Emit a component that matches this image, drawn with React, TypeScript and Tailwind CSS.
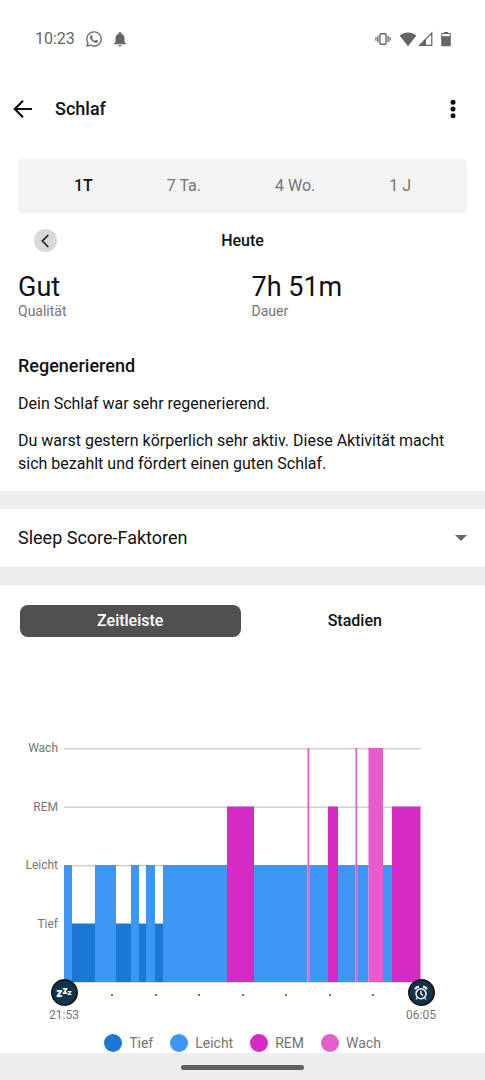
import { FaWhatsapp } from "react-icons/fa";
import { MdNotifications } from "react-icons/md";

type StageName = "Tief" | "Leicht" | "REM" | "Wach";

type Segment = {
  stage: StageName;
  start: number;
  end: number;
};

const stageFill: Record<StageName, string> = {
  Tief: "fill-[#1a77d4]",
  Leicht: "fill-[#3c96f4]",
  REM: "fill-[#d42cc2]",
  Wach: "fill-[#e65cca]",
};

const stageLevel: Record<StageName, number> = { Tief: 1, Leicht: 2, REM: 3, Wach: 4 };

const levels: StageName[] = ["Wach", "REM", "Leicht", "Tief"];
const legend: StageName[] = ["Tief", "Leicht", "REM", "Wach"];
const ranges = ["1T", "7 Ta.", "4 Wo.", "1 J"];

const segments: Segment[] = [
  { stage: "Leicht", start: 0, end: 8 },
  { stage: "Tief", start: 8, end: 31 },
  { stage: "Leicht", start: 31, end: 52 },
  { stage: "Tief", start: 52, end: 67 },
  { stage: "Leicht", start: 67, end: 75 },
  { stage: "Tief", start: 75, end: 82 },
  { stage: "Leicht", start: 82, end: 91 },
  { stage: "Tief", start: 91, end: 99 },
  { stage: "Leicht", start: 99, end: 163 },
  { stage: "REM", start: 163, end: 190 },
  { stage: "Leicht", start: 190, end: 243.5 },
  { stage: "Wach", start: 243.5, end: 245.3 },
  { stage: "Leicht", start: 245.3, end: 264 },
  { stage: "REM", start: 264, end: 274 },
  { stage: "Leicht", start: 274, end: 291.5 },
  { stage: "Wach", start: 291.5, end: 293.2 },
  { stage: "Leicht", start: 293.2, end: 304.5 },
  { stage: "Wach", start: 304.5, end: 319 },
  { stage: "Leicht", start: 319, end: 328 },
  { stage: "REM", start: 328, end: 356.5 },
];

function StatusBar() {
  return (
    <div className="flex h-[78px] items-center justify-between pl-[35px] pr-[34px] text-[#666]">
      <div className="flex items-center">
        <span className="text-base">10:23</span>
        <FaWhatsapp className="ml-2.5 size-[18px]" />
        <MdNotifications className="ml-2 size-[18px]" />
      </div>
      <div className="flex items-center">
        <svg className="h-4 w-4" viewBox="0 0 16 16" fill="none" stroke="currentColor">
          <rect x="5" y="2.8" width="6" height="10.4" rx="1" strokeWidth="1.4" />
          <path d="M2.9 4.8v6.4M13.1 4.8v6.4M.9 6.2v3.6M15.1 6.2v3.6" strokeWidth="1.3" />
        </svg>
        <svg className="ml-2 h-4 w-[18px]" viewBox="0 0 18 16" fill="currentColor">
          <path d="M9 15.2.6 4.6C5.4.6 12.6.6 17.4 4.6z" />
        </svg>
        <svg className="ml-px h-4 w-[15px]" viewBox="0 0 15 16">
          <path d="M1.6 14.3 13.8 2v12.3z" fill="none" stroke="currentColor" strokeWidth="1.2" />
          <path d="M.8 14.6 8 7.4v7.2z" fill="currentColor" />
        </svg>
        <svg className="ml-2 h-4 w-[10px]" viewBox="0 0 10 16">
          <path d="M3 2V.9h4V2h2q.8 0 .8.8v11.6q0 .8-.8.8H1q-.8 0-.8-.8V2.8Q.2 2 1 2z" fill="currentColor" />
          <path d="M1.2 3h7.6v2.2H1.2z" fill="#fff" />
        </svg>
      </div>
    </div>
  );
}

function Header() {
  return (
    <header className="flex h-[62px] items-center pl-3 pr-6">
      <button type="button" aria-label="Zurück">
        <svg className="h-[22px] w-[22px]" viewBox="0 0 22 22" fill="none" stroke="currentColor" strokeWidth="2.2">
          <path d="M20 11H3M11 2.8 2.8 11l8.2 8.2" />
        </svg>
      </button>
      <h1 className="ml-[21px] text-lg font-medium">Schlaf</h1>
      <button type="button" aria-label="Mehr Optionen" className="ml-auto">
        <svg className="h-5 w-4" viewBox="0 0 16 20" fill="currentColor">
          <circle cx="8" cy="3.2" r="2.5" />
          <circle cx="8" cy="10" r="2.5" />
          <circle cx="8" cy="16.8" r="2.5" />
        </svg>
      </button>
    </header>
  );
}

function Metric({ value, label }: { value: string; label: string }) {
  return (
    <div className="flex-1">
      <p className="text-[27px] leading-8">{value}</p>
      <p className="text-sm leading-4 text-[#757575]">{label}</p>
    </div>
  );
}

function SleepChart() {
  return (
    <div>
      <div className="flex pr-16">
        <div className="flex h-[234px] w-16 shrink-0 flex-col pr-1.5 text-right text-xs text-[#757575]">
          {levels.map((level) => (
            <div key={level} className="flex flex-1 items-center justify-end">
              {level}
            </div>
          ))}
        </div>
        <svg className="mt-7 h-[236px] min-w-0 flex-1" viewBox="0 0 357 236" preserveAspectRatio="none">
          {levels.map((level) => (
            <rect
              key={level}
              x="0"
              y={235 - stageLevel[level] * 58.5}
              width="357"
              height={level === "Tief" ? 0 : 1.5}
              className="fill-[#cfcfcf]"
            />
          ))}
          <rect x="0" y="234.5" width="357" height="1.3" className="fill-[#cfcfcf]" />
          {segments.map(({ stage, start, end }) => (
            <rect
              key={start}
              x={start}
              y={235 - stageLevel[stage] * 58.5}
              width={end - start}
              height={stageLevel[stage] * 58.5}
              className={stageFill[stage]}
            />
          ))}
        </svg>
      </div>
      <div className="relative -mt-1 flex items-start justify-between px-[50px]">
        <div className="flex w-7 flex-col items-center">
          <div className="flex h-[27px] w-[27px] items-center justify-center rounded-full border-2 border-[#1a1a1a] bg-[#103350] font-black text-white">
            <span className="text-xs leading-3">z</span>
            <span className="pb-1 text-[10px] leading-3">z</span>
            <span className="text-[8px] leading-3">z</span>
          </div>
          <span className="mt-px text-xs text-[#757575]">21:53</span>
        </div>
        <div className="flex h-8 flex-1 items-center justify-between px-[33px]">
          {[23, 0, 1, 2, 3, 4, 5].map((hour) => (
            <span key={hour} className="h-0.5 w-0.5 rounded-full bg-[#444]" />
          ))}
        </div>
        <div className="flex w-7 flex-col items-center">
          <div className="flex h-[27px] w-[27px] items-center justify-center rounded-full border-2 border-[#1a1a1a] bg-[#103350] text-white">
            <svg className="size-4" viewBox="0 0 16 16" fill="none" stroke="currentColor" strokeWidth="1.5">
              <circle cx="8" cy="8.7" r="5" />
              <path d="M8 5.8v3.1l2 1.5M4 13l-1 1.5M12 13l1 1.5" strokeWidth="1.3" />
              <path d="M2.2 4.3Q3.2 1.9 6 1.8M13.8 4.3Q12.8 1.9 10 1.8" strokeWidth="1.9" />
            </svg>
          </div>
          <span className="mt-px text-xs text-[#757575]">06:05</span>
        </div>
      </div>
      <ul className="mt-2.5 flex h-5 items-center justify-center gap-[17px] text-sm text-[#757575]">
        {legend.map((stage) => (
          <li key={stage} className="flex items-center gap-[7px]">
            <svg className="h-[18px] w-[18px]" viewBox="0 0 18 18">
              <circle cx="9" cy="9" r="9" className={stageFill[stage]} />
            </svg>
            {stage}
          </li>
        ))}
      </ul>
    </div>
  );
}

export default function App() {
  return (
    <div className="min-h-screen bg-white font-['Roboto',sans-serif] text-[#111]">
      <StatusBar />
      <Header />
      <main>
        <nav className="mx-[18px] mt-[19px] flex h-[54px] items-center justify-between rounded bg-[#f3f3f3] px-14">
          {ranges.map((range, i) => (
            <button
              key={range}
              type="button"
              aria-pressed={i === 0}
              className={i === 0 ? "text-base font-medium" : "text-base text-[#757575]"}
            >
              {range}
            </button>
          ))}
        </nav>

        <div className="grid h-[55px] grid-cols-[1fr_auto_1fr] items-center px-[34px]">
          <button
            type="button"
            aria-label="Vorheriger Tag"
            className="flex h-[23px] w-[23px] items-center justify-center rounded-full bg-[#d8d8d8]"
          >
            <svg className="h-4 w-4" viewBox="0 0 16 16" fill="none" stroke="currentColor" strokeWidth="1.5">
              <path d="M10.3 2 4.3 8l6 6" />
            </svg>
          </button>
          <h2 className="text-base font-medium">Heute</h2>
        </div>

        <section className="px-[18px] pb-4">
          <div className="flex gap-[18px] pt-[3px]">
            <Metric value="Gut" label="Qualität" />
            <Metric value="7h 51m" label="Dauer" />
          </div>
          <h2 className="mt-[35px] text-lg font-medium leading-6">Regenerierend</h2>
          <p className="mt-[14px] text-base leading-[23px]">Dein Schlaf war sehr regenerierend.</p>
          <p className="mt-[14px] text-base leading-[23px]">
            Du warst gestern körperlich sehr aktiv. Diese Aktivität macht sich bezahlt und fördert einen guten
            Schlaf.
          </p>
        </section>

        <section className="border-y-[18px] border-[#ededed]">
          <button
            type="button"
            aria-expanded={false}
            className="flex h-[58px] w-full items-center justify-between px-[18px] text-lg"
          >
            Sleep Score-Faktoren
            <svg className="h-1.5 w-3" viewBox="0 0 12 6" fill="#666">
              <path d="M0 0h12L6 6z" />
            </svg>
          </button>
        </section>

        <section>
          <div className="mb-[82px] grid grid-cols-2 gap-1 px-5 pt-5 text-base font-medium">
            <button type="button" aria-pressed className="h-8 rounded-lg bg-[#505050] text-white">
              Zeitleiste
            </button>
            <button type="button" aria-pressed={false} className="h-8 rounded-lg">
              Stadien
            </button>
          </div>
          <SleepChart />
        </section>
      </main>
      <footer className="flex h-7 items-center justify-center bg-[#ededed]">
        <div className="h-[5px] w-[123px] rounded-full bg-[#606060]" />
      </footer>
    </div>
  );
}
